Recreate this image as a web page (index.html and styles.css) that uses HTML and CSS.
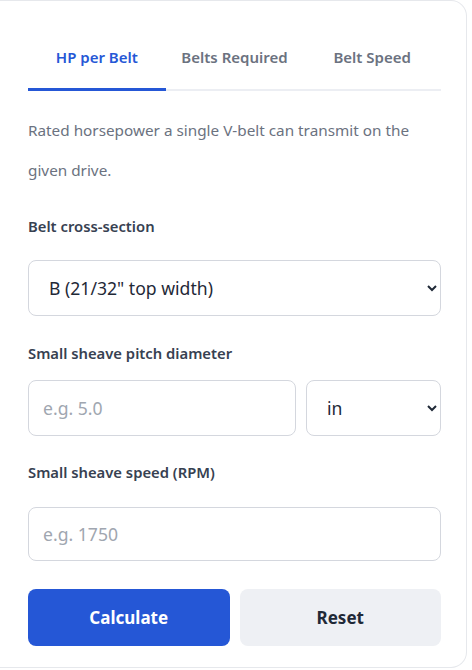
FILE: index.html
```html
<!DOCTYPE html>
<html lang="en">
<head>
    <meta charset="UTF-8">
    <meta name="viewport" content="width=device-width, initial-scale=1.0">
    <title>V-Belt Calculator</title>
    <link rel="stylesheet" href="styles.css">
</head>
<body>
    <main class="card">
        <nav class="tabs">
            <button class="tab tab-active">HP per Belt</button>
            <button class="tab">Belts Required</button>
            <button class="tab">Belt Speed</button>
        </nav>

        <p class="intro">Rated horsepower a single V-belt can transmit on the given drive.</p>

        <form class="form">
            <label class="label label-first" for="section">Belt cross-section</label>
            <select class="field select" id="section">
                <option>A (1/2" top width)</option>
                <option selected>B (21/32" top width)</option>
                <option>C (7/8" top width)</option>
                <option>D (1-1/4" top width)</option>
            </select>

            <label class="label label-diameter" for="diameter">Small sheave pitch diameter</label>
            <div class="row">
                <input class="field input" id="diameter" type="number" placeholder="e.g. 5.0">
                <select class="field select unit">
                    <option selected>in</option>
                    <option>mm</option>
                </select>
            </div>

            <label class="label label-speed" for="speed">Small sheave speed (RPM)</label>
            <input class="field input input-speed" id="speed" type="number" placeholder="e.g. 1750">

            <div class="actions">
                <button type="button" class="btn btn-primary">Calculate</button>
                <button type="reset" class="btn btn-light">Reset</button>
            </div>
        </form>
    </main>
</body>
</html>
```

FILE: styles.css
```css
:root {
    --blue: #2557d6;
    --text: #1f2937;
    --label: #374151;
    --muted: #6b7280;
    --border: #d4d7de;
    --line: #eceef3;
    --light: #eef0f4;
}

*,
*::before,
*::after {
    box-sizing: border-box;
    padding: 0;
    margin: 0;
}

body {
    background-color: #fff;
    color: var(--text);
    font-family: 'Noto Sans', sans-serif;
}

button,
input,
select {
    font-family: inherit;
    color: inherit;
    outline: none;
}

button {
    border: none;
    background: none;
    cursor: pointer;
}

.card {
    width: 467px;
    height: 668px;
    border: 1px solid #e6e8ec;
    border-left: none;
    border-radius: 0 16px 16px 0;
    padding: 24px 25px 0 28px;
    background-color: #fff;
}

.tabs {
    display: flex;
    border-bottom: 2px solid var(--line);
}

.tab {
    flex: 1;
    padding: 22px 0 21px;
    margin-bottom: -2px;
    border-bottom: 3px solid transparent;
    font-size: 15px;
    font-weight: 600;
    line-height: 20px;
    color: var(--muted);
}

.tab-active {
    color: var(--blue);
    border-bottom-color: var(--blue);
}

.intro {
    margin-top: 19px;
    font-size: 15.3px;
    line-height: 40px;
    color: var(--muted);
}

.form {
    display: flex;
    flex-direction: column;
}

.label {
    font-size: 14.8px;
    font-weight: 600;
    line-height: 20px;
    color: var(--label);
}

.label-first {
    margin-top: 26px;
    margin-bottom: 24px;
}

.label-diameter {
    margin-top: 27px;
    margin-bottom: 17px;
}

.label-speed {
    margin-top: 26px;
    margin-bottom: 25px;
}

.field {
    width: 100%;
    height: 56px;
    border: 1px solid var(--border);
    border-radius: 8px;
    background-color: #fff;
    font-size: 17.6px;
    color: var(--text);
}

.select {
    padding: 0 10px 0 16px;
}

.input {
    padding: 0 14px;
}

.input::placeholder {
    color: #a0a6b0;
}

.input::-webkit-inner-spin-button,
.input::-webkit-outer-spin-button {
    -webkit-appearance: none;
    margin: 0;
}

.input-speed {
    height: 54px;
}

.row {
    display: flex;
    gap: 10px;
}

.row .input {
    flex: 1;
}

.row .unit {
    width: 135px;
    flex: none;
}

.actions {
    display: grid;
    grid-template-columns: 1fr 1fr;
    gap: 10px;
    margin-top: 28px;
}

.btn {
    height: 57px;
    border-radius: 8px;
    font-size: 17px;
    font-weight: 700;
}

.btn-primary {
    background-color: var(--blue);
    color: #fff;
}

.btn-light {
    background-color: var(--light);
    color: var(--text);
}
```
